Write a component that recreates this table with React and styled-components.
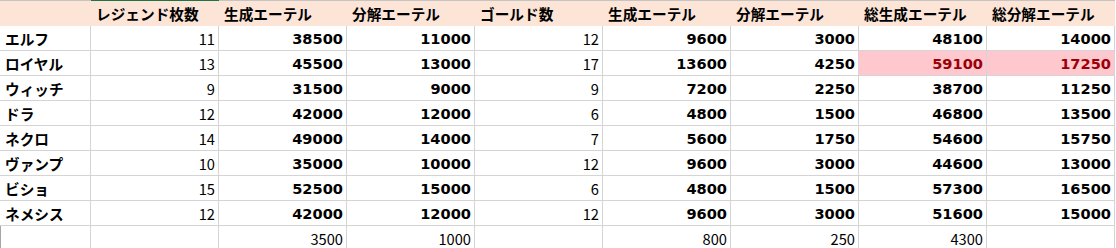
import React from "react";
import styled, { createGlobalStyle } from "styled-components";

const GlobalStyle = createGlobalStyle`
  html, body {
    margin: 0;
    padding: 0;
    background: #ffffff;
  }
  body {
    font-family: "Noto Sans CJK JP", "Noto Sans", sans-serif;
    color: #000000;
  }
`;

const headers = [
  "",
  "レジェンド枚数",
  "生成エーテル",
  "分解エーテル",
  "ゴールド数",
  "生成エーテル",
  "分解エーテル",
  "総生成エーテル",
  "総分解エーテル",
];

const rows = [
  ["エルフ", 11, 38500, 11000, 12, 9600, 3000, 48100, 14000],
  ["ロイヤル", 13, 45500, 13000, 17, 13600, 4250, 59100, 17250],
  ["ウィッチ", 9, 31500, 9000, 9, 7200, 2250, 38700, 11250],
  ["ドラ", 12, 42000, 12000, 6, 4800, 1500, 46800, 13500],
  ["ネクロ", 14, 49000, 14000, 7, 5600, 1750, 54600, 15750],
  ["ヴァンプ", 10, 35000, 10000, 12, 9600, 3000, 44600, 13000],
  ["ビショ", 15, 52500, 15000, 6, 4800, 1500, 57300, 16500],
  ["ネメシス", 12, 42000, 12000, 12, 9600, 3000, 51600, 15000],
];

const footer = ["", "", 3500, 1000, "", 800, 250, 4300, ""];

const boldCols = [2, 3, 5, 6, 7, 8];

// the top row with the highest totals gets the red highlight
const highlightRow = 1;
const highlightCols = [7, 8];

const Sheet = styled.div`
  width: 1116px;
  height: 248px;
  overflow: hidden;
  background: #ffffff;
`;

const Row = styled.div`
  display: grid;
  grid-template-columns: 91px repeat(8, 128px);
`;

const HeaderCell = styled.div`
  box-sizing: border-box;
  height: 26px;
  padding: 0 5px;
  display: flex;
  align-items: center;
  background: #fce4d6;
  border-top: 1px solid ${({ $active }) => ($active ? "#217346" : "#c4c4c4")};
  font-size: 14.67px;
  font-weight: 700;
  white-space: nowrap;
`;

const Cell = styled.div`
  box-sizing: border-box;
  height: 25px;
  padding: 0 3px 0 5px;
  display: flex;
  align-items: center;
  justify-content: ${({ $text }) => ($text ? "flex-start" : "flex-end")};
  border-right: 1px solid #d4d4d4;
  border-bottom: 1px solid #d4d4d4;
  background: ${({ $hot }) => ($hot ? "#ffc7ce" : "#ffffff")};
  color: ${({ $hot }) => ($hot ? "#9c0006" : "#000000")};
  font-size: 14.67px;
  white-space: nowrap;
  box-shadow: ${({ $edge }) => ($edge ? "inset 1px 0 #a6a6a6" : "none")};
`;

const Name = styled.span`
  font-weight: 700;
`;

const Num = styled.span`
  font-family: ${({ $bold }) =>
    $bold ? '"DejaVu Sans", sans-serif' : '"Noto Sans CJK JP", sans-serif'};
  font-weight: ${({ $bold }) => ($bold ? 700 : 400)};
  font-size: ${({ $bold }) => ($bold ? "14.6px" : "14.67px")};
`;

function App() {
  return (
    <>
      <GlobalStyle />
      <Sheet>
        <Row>
          {headers.map((h, i) => (
            <HeaderCell key={i} $active={i === 1}>
              {h}
            </HeaderCell>
          ))}
        </Row>
        {rows.map((r, ri) => (
          <Row key={ri}>
            {r.map((v, ci) => {
              const hot = ri === highlightRow && highlightCols.includes(ci);
              if (ci === 0) {
                return (
                  <Cell key={ci} $text>
                    <Name>{v}</Name>
                  </Cell>
                );
              }
              return (
                <Cell key={ci} $hot={hot}>
                  <Num $bold={boldCols.includes(ci)}>{v}</Num>
                </Cell>
              );
            })}
          </Row>
        ))}
        <Row>
          {footer.map((v, ci) => (
            <Cell key={ci} $edge={ci === 0}>
              <Num>{v}</Num>
            </Cell>
          ))}
        </Row>
      </Sheet>
    </>
  );
}

export default App;
